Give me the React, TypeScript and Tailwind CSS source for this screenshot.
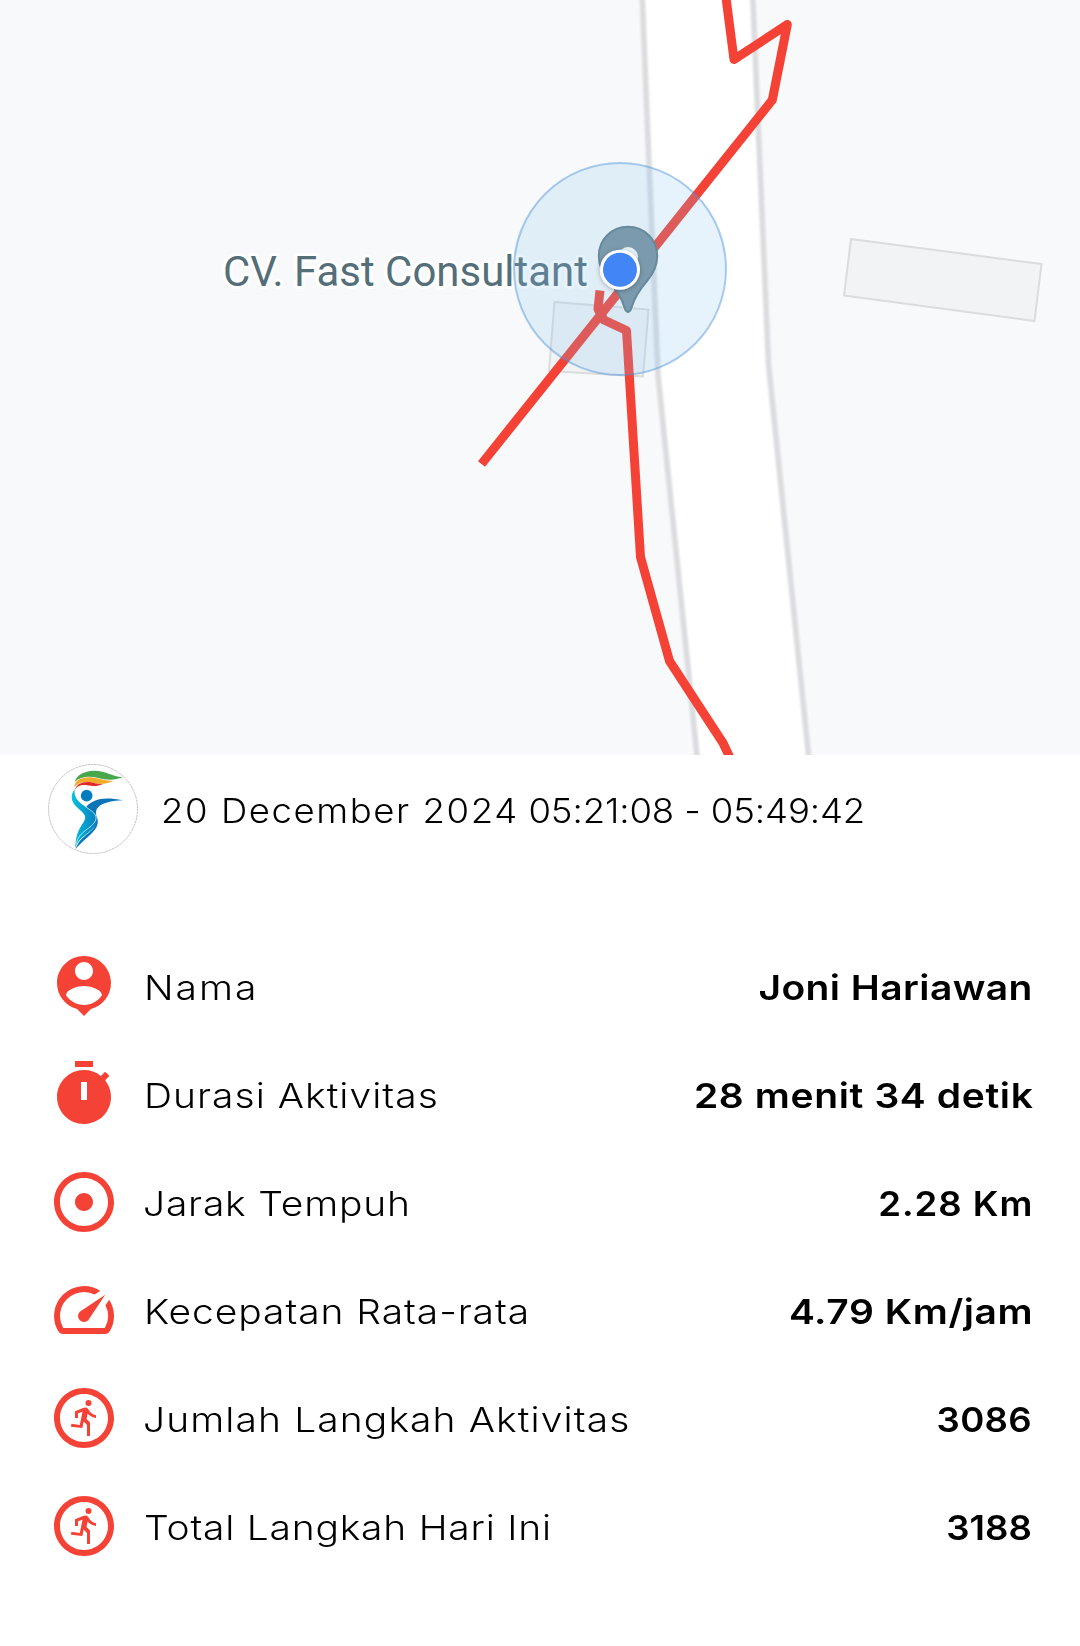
const RED = '#f44336';

const ICONS = {
  person:
    'M12 2c-4.97 0-9 4.03-9 9 0 4.17 2.84 7.67 6.69 8.69L12 22l2.31-2.31C18.16 18.67 21 15.17 21 11c0-4.97-4.03-9-9-9zm0 2c1.66 0 3 1.34 3 3s-1.34 3-3 3-3-1.34-3-3 1.34-3 3-3zm0 14.3c-2.5 0-4.71-1.28-6-3.22.03-1.99 4-3.08 6-3.08 1.99 0 5.97 1.09 6 3.08-1.29 1.94-3.5 3.22-6 3.22z',
  timer:
    'M15 1H9v2h6V1zm4.03 6.39l1.42-1.42c-.43-.51-.9-.99-1.41-1.41l-1.42 1.42A8.962 8.962 0 0 0 12 4c-4.97 0-9 4.03-9 9s4.02 9 9 9a8.994 8.994 0 0 0 7.03-14.61zM13 14h-2V8h2v6z',
  target:
    'M12 2C6.48 2 2 6.48 2 12s4.48 10 10 10 10-4.48 10-10S17.52 2 12 2zm0 18c-4.41 0-8-3.59-8-8s3.59-8 8-8 8 3.59 8 8-3.59 8-8 8zm3-8c0 1.66-1.34 3-3 3s-3-1.34-3-3 1.34-3 3-3 3 1.34 3 3z',
  speed:
    'M20.38 8.57l-1.23 1.85a8 8 0 0 1-.22 7.58H5.07A8 8 0 0 1 15.58 6.85l1.85-1.23A10 10 0 0 0 3.35 19a2 2 0 0 0 1.72 1h13.85a2 2 0 0 0 1.74-1 10 10 0 0 0-.27-10.44zM10.59 15.41a2 2 0 0 0 2.83 0l5.66-8.49-8.49 5.66a2 2 0 0 0 0 2.83z',
  run:
    'M12 2C6.48 2 2 6.48 2 12s4.48 10 10 10 10-4.48 10-10S17.52 2 12 2zm0 18c-4.41 0-8-3.59-8-8s3.59-8 8-8 8 3.59 8 8-3.59 8-8 8zM14.5 7a1 1 0 1 1-2 0 1 1 0 0 1 2 0zM16 12C14.9 11.85 13.9 11.3 13.2 10.6L12.85 12.3L14 13.5V18H13V14.3L11.9 13.2L11.45 15.3L7.65 14.9L7.8 13.95L10.6 14.3L11.5 9.9L10 10.4V12H9V9.75L11.7 8.65C12.5 8.3 13.1 8.5 13.45 9.1C14 10.2 14.9 10.85 16 11.05Z',
};

const ROWS: { icon: keyof typeof ICONS; label: string; labelClass: string; value: string; valueClass: string }[] = [
  { icon: 'person', label: 'Nama', labelClass: 'tracking-[1.74px]', value: 'Joni Hariawan', valueClass: 'scale-x-[1.13] tracking-[0.37px]' },
  { icon: 'timer', label: 'Durasi Aktivitas', labelClass: 'tracking-[0.91px]', value: '28 menit 34 detik', valueClass: 'scale-x-[1.13] tracking-[0.55px]' },
  { icon: 'target', label: 'Jarak Tempuh', labelClass: '-ml-px tracking-[0.7px]', value: '2.28 Km', valueClass: 'scale-x-[1.06] tracking-[0.9px]' },
  { icon: 'speed', label: 'Kecepatan Rata-rata', labelClass: 'tracking-[0.81px]', value: '4.79 Km/jam', valueClass: 'scale-x-[1.13] tracking-[0.5px]' },
  { icon: 'run', label: 'Jumlah Langkah Aktivitas', labelClass: '-ml-px tracking-[0.97px]', value: '3086', valueClass: 'scale-x-[1.06] mr-px tracking-[0.3px]' },
  { icon: 'run', label: 'Total Langkah Hari Ini', labelClass: 'tracking-[0.68px]', value: '3188', valueClass: 'scale-x-[1.06] mr-px tracking-[0.1px]' },
];

function RouteMap() {
  return (
    <svg className="block h-[755px] w-[1080px] shrink-0" viewBox="0 0 1080 755">
      <defs>
        <filter id="soft" x="-5%" y="-5%" width="110%" height="110%">
          <feGaussianBlur stdDeviation="1.1" />
        </filter>
        <filter id="shadow" x="-50%" y="-50%" width="200%" height="200%">
          <feDropShadow dx="0" dy="1" stdDeviation="2.5" floodOpacity="0.3" />
        </filter>
      </defs>
      <rect width="1080" height="755" fill="#f8f9fb" />

      {/* road */}
      <path d="M642-10L648 140L658 375L697.5 765H809L768.5 364L757.5 110L752.5-10Z" fill="#fff" />
      <g fill="none" stroke="#dadce0" strokeWidth="5.6" filter="url(#soft)">
        <path d="M642-10L648 140L658 375L698 765" />
        <path d="M752.5-10L757.5 110L768.5 364L809.5 765" />
      </g>

      {/* buildings */}
      <g fill="#f1f3f4" stroke="#dadcde" strokeWidth="2" strokeLinejoin="round">
        <path d="M851 239L1041.5 264L1034.5 321L844 295.5Z" />
        <path d="M554.5 302L648.5 309.5L643 376.5L549 371Z" />
      </g>

      {/* walked route */}
      <g fill="none" stroke={RED} strokeWidth="9" strokeLinejoin="round">
        <path d="M725-10L734 59.500L787.3 24.5L772.3 100L481.5 464" />
        <path d="M600 290.5L598 309L604 320L626.5 330.5L640.5 557L669.5 661L723 743L732.5 763" />
      </g>

      {/* place label and marker */}
      <text
        x="223"
        y="286.2"
        textLength="365"
        fontFamily="Roboto, sans-serif"
        fontSize="41.9"
        fill="#546e7a"
        stroke="#fff"
        strokeWidth="6"
        strokeLinejoin="round"
        paintOrder="stroke"
      >
        CV. Fast Consultant
      </text>
      <path
        d="M628 226.8C611.5 226.8 598.8 239.8 598.8 256C598.8 266 603 274 609 281C616 289 621 296 624.3 307C625.3 310.5 626 312 628 312C630 312 630.7 310.5 631.7 307C635 296 640 289 647 281C653 274 657.2 266 657.2 256C657.2 239.8 644.5 226.8 628 226.8Z"
        fill="#7b909d"
        stroke="#5f7c88"
        strokeWidth="2"
      />
      <circle cx="628" cy="257" r="10" fill="#fff" />

      {/* accuracy radius and current position */}
      <circle cx="620" cy="269" r="106" fill="#82c3f0" fillOpacity="0.2" stroke="#4a90d9" strokeOpacity="0.45" strokeWidth="2" />
      <circle cx="620" cy="269.7" r="20" fill="#fff" filter="url(#shadow)" />
      <circle cx="620" cy="269.7" r="17" fill="#4285f4" />
    </svg>
  );
}

function Logo() {
  return (
    <svg className="size-[90px] shrink-0" viewBox="6 6 270 270">
      <defs>
        <linearGradient id="body" x1="0" x2="1" y1="0" y2="0">
          <stop offset="0" stopColor="#04c3dc" />
          <stop offset="1" stopColor="#047cbe" />
        </linearGradient>
      </defs>
      <circle cx="141" cy="141" r="133.5" fill="#fff" stroke="#b0b0b0" strokeWidth="2.4" strokeDasharray="7 2" />
      <path d="M86 59C92 40 112 27 145 26C180 26 196 43 231 46C204 56 180 54 157 48C130 41 104 43 86 59Z" fill="#48a64b" />
      <path d="M85 75C86 55 105 45 135 46C160 49 175 57 203 57C180 67 160 68 142 63C118 56 97 61 85 75Z" fill="#f3ab2c" />
      <path d="M86 84C91 67 108 58 130 60C145 62 153 67 172 67C154 74 138 73 124 70C106 67 94 71 86 84Z" fill="#e02b2b" />
      <circle cx="122" cy="101" r="17.5" fill="#047cbe" />
      <path d="M120 135C142 111 172 103 231 115C190 117 165 124 153 140C149 147 150 151 151 161Z" fill="#0a74b9" />
      <path d="M86 82C72 99 76 119 89 132C104 147 121 155 117 172C110 190 88 206 88 260C94 222 147 208 154 179C158 151 121 139 104 124C90 112 84 101 86 82Z" fill="url(#body)" />
      <path d="M151 161C162 210 103 212 89 261C112 231 150 211 155 185C156 174 153 166 151 161Z" fill="#0878bb" />
      <path d="M118 134C140 148 154 158 149 174C140 200 98 206 90 246" fill="none" stroke="#fff" strokeWidth="2" />
    </svg>
  );
}

export default function App() {
  return (
    <main className="flex h-[1646px] w-[1080px] flex-col overflow-hidden bg-white font-['Inter',sans-serif] text-[34.5px] text-black">
      <RouteMap />
      <header className="flex h-[108px] shrink-0 items-center pl-12">
        <Logo />
        <p className="ml-[23px] origin-left scale-x-[1.06] pt-1 leading-none font-light tracking-[1.46px] whitespace-nowrap">
          20 December 2024 <span className="-ml-0.5 tracking-[-0.12px]">05:21:08 - 05:49:42</span>
        </p>
      </header>
      <section className="mt-[69px] flex flex-col">
        {ROWS.map((row) => (
          <div key={row.label} className="flex h-[108px] items-center justify-between pr-[47px] pl-12">
            <div className="flex items-center gap-6">
              <svg className="size-[72px] shrink-0" viewBox="0 0 24 24" fill={RED}>
                <path d={ICONS[row.icon]} />
              </svg>
              <span className={`origin-left scale-x-[1.13] pt-1 leading-none font-light whitespace-nowrap ${row.labelClass}`}>
                {row.label}
              </span>
            </div>
            <span className={`origin-right pt-1 leading-none font-semibold whitespace-nowrap ${row.valueClass}`}>
              {row.value}
            </span>
          </div>
        ))}
      </section>
    </main>
  );
}
